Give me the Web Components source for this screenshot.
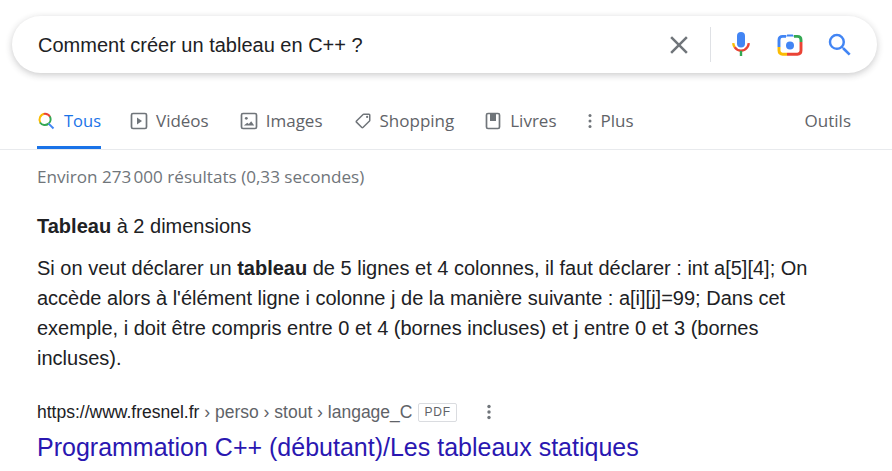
<!DOCTYPE html>
<html lang="fr">
<head>
<meta charset="utf-8">
<title>Comment créer un tableau en C++ ?</title>
<style>
  html, body { margin: 0; padding: 0; background: #fff; }
  body { width: 892px; height: 471px; overflow: hidden; font-family: "Liberation Sans", Arial, sans-serif; }
</style>
</head>
<body>
<search-box query="Comment créer un tableau en C++ ?"></search-box>
<search-tabs></search-tabs>
<result-stats>Environ 273&#8239;000 résultats (0,33 secondes)</result-stats>
<featured-snippet heading-bold="Tableau" heading-rest=" à 2 dimensions">
  <snippet-line>Si on veut déclarer un <b>tableau</b> de 5 lignes et 4 colonnes, il faut déclarer : int a[5][4]; On</snippet-line>
  <snippet-line>accède alors à l'élément ligne i colonne j de la manière suivante : a[i][j]=99; Dans cet</snippet-line>
  <snippet-line>exemple, i doit être compris entre 0 et 4 (bornes incluses) et j entre 0 et 3 (bornes</snippet-line>
  <snippet-line>incluses).</snippet-line>
</featured-snippet>
<result-link site="https://www.fresnel.fr" crumbs=" › perso › stout › langage_C" title="Programmation C++ (débutant)/Les tableaux statiques"></result-link>

<script>
class SearchBox extends HTMLElement {
  constructor() {
    super();
    this.attachShadow({ mode: 'open' });
    this.shadowRoot.innerHTML = `
      <style>
        :host { display: block; padding: 16px 15px 0 12px; }
        .bar {
          height: 57px;
          border-radius: 29px;
          background: #fff;
          box-shadow: 0 2px 7px rgba(32, 33, 36, 0.24);
          display: flex;
          align-items: center;
          padding: 0 22px 0 26px;
        }
        .query {
          flex: 1;
          font: 20px/24px "Liberation Sans", Arial, sans-serif;
          color: #202124;
          white-space: nowrap;
        }
        .actions { display: flex; align-items: center; }
        svg { display: block; }
        .sep { width: 1px; height: 35px; background: #dfe1e5; margin: 0 18px 0 16px; }
        .mic { margin-right: 24px; }
        .lens { margin-right: 22px; }
      </style>
      <div class="bar">
        <div class="query"></div>
        <div class="actions">
          <svg width="30" height="30" viewBox="0 0 24 24"><path fill="#70757a" d="M19 6.410 17.590 5 12 10.590 6.410 5 5 6.410 10.590 12 5 17.590 6.410 19 12 13.410 17.590 19 19 17.590 13.410 12z"/></svg>
          <div class="sep"></div>
          <svg class="mic" width="24" height="27" viewBox="0 0 24 27">
            <rect x="8" y="1" width="8" height="15.500" rx="4" fill="#4285f4"/>
            <path d="M4.200 12.200c.2 1.600.6 2.800 1.400 3.900" fill="none" stroke="#fbbc04" stroke-width="2.400"/>
            <path d="M5.600 16.100c1.400 2.100 3.600 3.600 6.400 3.600s5-1.500 6.400-3.600c.8-1.100 1.200-2.300 1.400-3.900" fill="none" stroke="#ea4335" stroke-width="2.400"/>
            <rect x="10.800" y="19.800" width="2.400" height="5.200" fill="#34a853"/>
          </svg>
          <svg class="lens" width="26" height="24" viewBox="0 0 26 24">
            <path d="M9 3.400 10.200 1.400h5.600L17 3.400z" fill="#4285f4"/>
            <path d="M17 3.400h3.400c2.200 0 3.600 1.400 3.600 3.600v2" fill="none" stroke="#34a853" stroke-width="2.900"/>
            <path d="M24 9v8.600c0 2.200-1.400 3.600-3.600 3.600H10" fill="none" stroke="#ea4335" stroke-width="2.900"/>
            <path d="M10 21.200H5.600c-2.200 0-3.600-1.400-3.600-3.600V14" fill="none" stroke="#fbbc04" stroke-width="2.900"/>
            <path d="M2 14V7c0-2.200 1.400-3.600 3.600-3.600H9" fill="none" stroke="#4285f4" stroke-width="2.900"/>
            <circle cx="13" cy="12.400" r="4" fill="#4285f4"/>
          </svg>
          <svg width="30" height="30" viewBox="0 0 24 24"><path fill="#4285f4" d="M15.500 14h-.79l-.28-.27A6.470 6.470 0 0 0 16 9.500 6.500 6.500 0 1 0 9.500 16c1.610 0 3.090-.59 4.230-1.570l.27.28v.79l5 4.990L20.490 19l-4.990-5zm-6 0C7.010 14 5 11.990 5 9.500S7.010 5 9.500 5 14 7.010 14 9.500 11.990 14 9.500 14z"/></svg>
        </div>
      </div>`;
  }
  connectedCallback() {
    this.shadowRoot.querySelector('.query').textContent = this.getAttribute('query');
  }
}
customElements.define('search-box', SearchBox);

class TabItem extends HTMLElement {
  constructor() {
    super();
    this.attachShadow({ mode: 'open' });
    this.shadowRoot.innerHTML = `
      <style>
        :host {
          display: flex;
          align-items: center;
          gap: 8px;
          height: 41px;
          padding-bottom: 5px;
          color: #5f6368;
          border-bottom: 3px solid transparent;
          font: 17px/22px "Open Sans", Roboto, sans-serif;
          white-space: nowrap;
        }
        :host([active]) { color: #1a73e8; border-bottom-color: #1a73e8; font-size: 16.500px; }
        ::slotted(svg) { display: block; flex: none; margin-top: 1px; }
      </style>
      <slot name="icon"></slot><slot></slot>`;
  }
}
customElements.define('tab-item', TabItem);

class SearchTabs extends HTMLElement {
  constructor() {
    super();
    this.attachShadow({ mode: 'open' });
    this.shadowRoot.innerHTML = `
      <style>
        :host { display: block; margin-top: 27px; border-bottom: 1px solid #e8eaed; }
        .row { display: flex; padding: 0 41px 0 37px; height: 49px; }
        .row tab-item { margin-right: 31px; }
        .row tab-item[active] { margin-right: 29px; }
        .row tab-item.more { margin-left: auto; margin-right: 0; }
      </style>
      <nav class="row">
        <tab-item active style="gap:9px">
          <svg slot="icon" width="18" height="18" viewBox="0 0 24 24">
            <path d="M4.500 14.500A8 8 0 0 1 10 2.400" fill="none" stroke="#fbbc04" stroke-width="2.600"/>
            <path d="M9 2.500A8 8 0 0 1 17.500 6.500" fill="none" stroke="#ea4335" stroke-width="2.600"/>
            <path d="M17.200 6A8 8 0 0 1 15.500 15.500" fill="none" stroke="#34a853" stroke-width="2.600" />
            <path d="M4 14A8 8 0 0 0 15.500 15.500" fill="none" stroke="#34a853" stroke-width="2.600"/>
            <path d="M15.500 15.500 22 22" stroke="#4285f4" stroke-width="2.600" fill="none"/>
          </svg>
          Tous
        </tab-item>
        <tab-item>
          <svg slot="icon" width="18" height="18" viewBox="0 0 18 18">
            <rect x="1.500" y="1.500" width="15" height="15" rx="1.500" fill="none" stroke="#70757a" stroke-width="1.700"/>
            <path d="M7 5.500v7l5-3.500z" fill="#70757a"/>
          </svg>
          Vidéos
        </tab-item>
        <tab-item>
          <svg slot="icon" width="18" height="18" viewBox="0 0 18 18">
            <rect x="1.500" y="1.500" width="15" height="15" rx="1.500" fill="none" stroke="#70757a" stroke-width="1.700"/>
            <circle cx="6.300" cy="6.300" r="1.400" fill="#70757a"/>
            <path d="M3.800 13.500h10.400l-3-4.200-2.400 2.800-1.500-1.400z" fill="#70757a"/>
          </svg>
          Images
        </tab-item>
        <tab-item>
          <svg slot="icon" width="18" height="18" viewBox="0 0 24 24"><path fill="#70757a" d="M21.410 11.410l-8.830-8.830A2 2 0 0 0 11.170 2H4a2 2 0 0 0-2 2v7.170c0 .53.210 1.040.59 1.410l8.830 8.830c.78.78 2.050.78 2.830 0l7.170-7.170c.78-.78.78-2.050-.01-2.830zM12.830 20L4 11.170V4h7.170L20 12.830 12.830 20z" transform="translate(24 0) scale(-1 1)"/><circle cx="17.500" cy="6.500" r="1.500" fill="#70757a"/></svg>
          Shopping
        </tab-item>
        <tab-item style="margin-left:-1px">
          <svg slot="icon" width="18" height="18" viewBox="0 0 18 18">
            <rect x="2.500" y="1.500" width="13" height="15" rx="1.500" fill="none" stroke="#70757a" stroke-width="1.700"/>
            <path d="M6 2h6v7H6z" fill="#70757a"/>
          </svg>
          Livres
        </tab-item>
        <tab-item style="gap:9px">
          <svg slot="icon" width="4" height="16" viewBox="0 0 4 16">
            <circle cx="2" cy="2.500" r="1.500" fill="#70757a"/><circle cx="2" cy="8" r="1.500" fill="#70757a"/><circle cx="2" cy="13.500" r="1.500" fill="#70757a"/>
          </svg>
          Plus
        </tab-item>
        <tab-item class="more">Outils</tab-item>
      </nav>`;
  }
}
customElements.define('search-tabs', SearchTabs);

class ResultStats extends HTMLElement {
  constructor() {
    super();
    this.attachShadow({ mode: 'open' });
    this.shadowRoot.innerHTML = `
      <style>
        :host {
          display: block;
          padding: 16px 37px 0;
          font: 17.100px/22px "Open Sans", Roboto, sans-serif;
          color: #70757a;
        }
      </style>
      <slot></slot>`;
  }
}
customElements.define('result-stats', ResultStats);

class SnippetLine extends HTMLElement {
  constructor() {
    super();
    this.attachShadow({ mode: 'open' });
    this.shadowRoot.innerHTML = `
      <style>
        :host { display: block; white-space: nowrap; }
        ::slotted(b) { font-weight: 700; }
      </style>
      <slot></slot>`;
  }
}
customElements.define('snippet-line', SnippetLine);

class FeaturedSnippet extends HTMLElement {
  constructor() {
    super();
    this.attachShadow({ mode: 'open' });
    this.shadowRoot.innerHTML = `
      <style>
        :host {
          display: block;
          padding: 23px 37px 0;
          color: #202124;
          font: 20px/30px "Liberation Sans", Arial, sans-serif;
        }
        .heading { line-height: 30px; margin-bottom: 12px; }
        .heading b { font-weight: 700; }
      </style>
      <div class="heading"><b></b><span></span></div>
      <div class="body"><slot></slot></div>`;
  }
  connectedCallback() {
    this.shadowRoot.querySelector('b').textContent = this.getAttribute('heading-bold');
    this.shadowRoot.querySelector('span').textContent = this.getAttribute('heading-rest');
  }
}
customElements.define('featured-snippet', FeaturedSnippet);

class ResultLink extends HTMLElement {
  constructor() {
    super();
    this.attachShadow({ mode: 'open' });
    this.shadowRoot.innerHTML = `
      <style>
        :host { display: block; padding: 27px 37px 0; font-family: "Liberation Sans", Arial, sans-serif; }
        .cite { display: flex; align-items: center; height: 24px; font-size: 17.500px; color: #202124; white-space: nowrap; }
        .crumbs { color: #5f6368; white-space: pre; }
        .pdf {
          border: 1px solid #dadce0;
          border-radius: 2px;
          font-size: 12px;
          letter-spacing: .8px;
          color: #5f6368;
          padding: 1.500px 5px;
          line-height: 14px;
          margin-left: 6px;
        }
        svg { margin-left: 29px; display: block; }
        .title { font-size: 25px; line-height: 36px; color: #2a17b1; white-space: nowrap; margin-top: 5px; }
      </style>
      <div class="cite">
        <span class="site"></span><span class="crumbs"></span><span class="pdf">PDF</span>
        <svg width="6" height="16" viewBox="0 0 6 16"><circle cx="3" cy="2.500" r="1.700" fill="#70757a"/><circle cx="3" cy="8" r="1.700" fill="#70757a"/><circle cx="3" cy="13.500" r="1.700" fill="#70757a"/></svg>
      </div>
      <div class="title"></div>`;
  }
  connectedCallback() {
    this.shadowRoot.querySelector('.site').textContent = this.getAttribute('site');
    this.shadowRoot.querySelector('.crumbs').textContent = this.getAttribute('crumbs');
    this.shadowRoot.querySelector('.title').textContent = this.getAttribute('title');
  }
}
customElements.define('result-link', ResultLink);
</script>
</body>
</html>
